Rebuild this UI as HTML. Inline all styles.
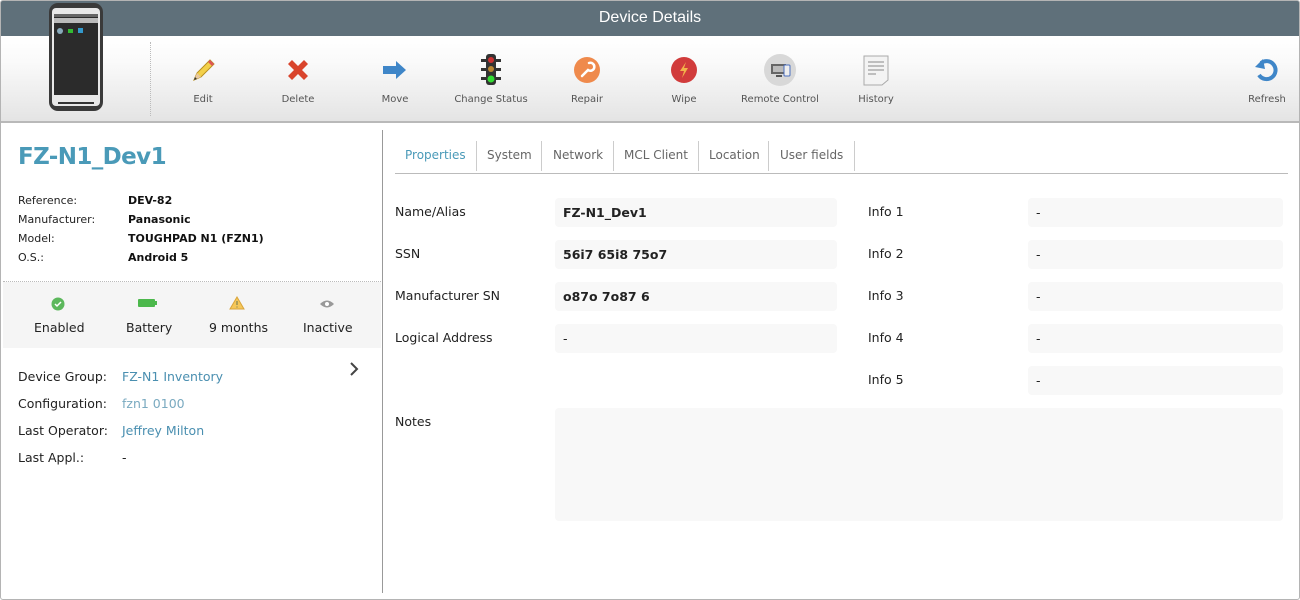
<!DOCTYPE html>
<html><head><meta charset="utf-8">
<style>
*{margin:0;padding:0;box-sizing:border-box}
body{width:1300px;height:600px;background:#fff;font-family:"DejaVu Sans",Verdana,sans-serif;position:relative;overflow:hidden;color:#222}
.abs{position:absolute}
#frame{left:0;top:0;width:1300px;height:600px;border:1px solid #b4b4b4;border-radius:3px}
#hdr{left:1px;top:1px;width:1298px;height:35px;background:#5f707a;color:#fff;font-family:"Liberation Sans",sans-serif;font-size:16px;text-align:center;line-height:34px}
#tb{left:1px;top:36px;width:1298px;height:87px;background:linear-gradient(#fff,#fafafa 30%,#e4e4e4);border-bottom:2px solid #b9b9b9}
.tl{position:absolute;top:94px;font-size:10px;color:#555;transform:translateX(-50%);white-space:nowrap}
.ic{position:absolute;top:56px;transform:translateX(-50%)}
.lbl{position:absolute;font-size:11px;color:#222}
.val{position:absolute;font-size:11px;font-weight:bold;color:#111}
.l2{position:absolute;font-size:12.5px;color:#222}
.lnk{position:absolute;font-size:12.5px;color:#4a8fb0}
.tab{position:absolute;top:148px;font-size:12px;color:#666}
.sep{position:absolute;top:141px;width:1px;height:30px;background:#ccc}
.fl{position:absolute;font-size:12.5px;color:#222}
.box{position:absolute;background:#f8f8f8;border-radius:4px;height:29px;font-size:12.5px;padding:7px 8px;color:#222}
.box b{font-weight:bold}
</style></head><body>
<div id="hdr" class="abs">Device Details</div>
<div id="tb" class="abs"></div>
<svg class="abs" style="left:48px;top:2px" width="56" height="110" viewBox="0 0 56 110">
<rect x="1" y="1" width="54" height="108" rx="9" fill="#3a3a3a"/>
<rect x="4" y="6" width="48" height="98" rx="4" fill="#e8e8e8"/>
<rect x="6" y="12" width="44" height="81" fill="#2b2b2b"/>
<rect x="6" y="12" width="44" height="3" fill="#666"/>
<rect x="6" y="16" width="44" height="5" fill="#bbb"/>
<circle cx="12" cy="29" r="3" fill="#8ab"/><rect x="20" y="27" width="5" height="4" fill="#3b3"/><rect x="30" y="26" width="5" height="5" fill="#39c"/>
<rect x="10" y="100" width="36" height="2" fill="#333"/>
</svg>
<div class="abs" style="left:150px;top:42px;height:74px;border-left:1px dotted #bbb"></div>
<svg class="ic" style="left:203px" width="28" height="28" viewBox="0 0 28 28"><path d="M5 24 L8 17 L21 4 L25 8 L12 21 Z" fill="#f3d04a" stroke="#b89020" stroke-width="1"/><path d="M21 4 L25 8 L23 10 L19 6Z" fill="#d55"/><path d="M5 24 L8 17 L12 21Z" fill="#e9c9a0"/><path d="M5 24 L6 21 L8 23Z" fill="#333"/></svg>
<svg class="ic" style="left:298px" width="28" height="28" viewBox="0 0 28 28"><path d="M4 8 L8 4 L14 10 L20 4 L24 8 L18 14 L24 20 L20 24 L14 18 L8 24 L4 20 L10 14 Z" fill="#d9442c"/></svg>
<svg class="ic" style="left:395px" width="28" height="28" viewBox="0 0 28 28"><path d="M2 10 H15 V5 L25 14 L15 23 V18 H2 Z" fill="#3f86c8"/></svg>
<svg class="ic" style="left:491px;top:53px" width="24" height="34" viewBox="0 0 24 34"><rect x="7" y="1" width="10" height="31" rx="3" fill="#333"/><path d="M2 6h5v3H2zM17 6h5v3h-5zM2 15h5v3H2zM17 15h5v3h-5zM2 24h5v3H2zM17 24h5v3h-5z" fill="#333"/><circle cx="12" cy="7" r="3" fill="#c33"/><circle cx="12" cy="16" r="3" fill="#b83"/><circle cx="12" cy="26" r="3.5" fill="#3d3"/></svg>
<svg class="ic" style="left:587px" width="28" height="28" viewBox="0 0 28 28"><circle cx="14" cy="14" r="13" fill="#ef8a4c"/><path d="M9 20 L15 14 M15 14 a4 4 0 1 0 1 -7" stroke="#fff" stroke-width="2.5" fill="none" stroke-linecap="round"/></svg>
<svg class="ic" style="left:684px" width="28" height="28" viewBox="0 0 28 28"><circle cx="14" cy="14" r="13" fill="#d13b3b"/><path d="M16 6 L10 15 H14 L12 22 L18 12 H14 Z" fill="#f2b34a"/></svg>
<svg class="ic" style="left:780px;top:54px" width="32" height="32" viewBox="0 0 32 32"><circle cx="16" cy="16" r="16" fill="#d8d8d8"/><rect x="7" y="10" width="15" height="10" fill="#666"/><rect x="9" y="12" width="11" height="6" fill="#bbb"/><rect x="20" y="11" width="6" height="11" rx="1" fill="#eee" stroke="#4a6fbf"/><rect x="12" y="21" width="6" height="2" fill="#555"/></svg>
<svg class="ic" style="left:876px;top:54px" width="28" height="32" viewBox="0 0 28 32"><path d="M2 2 H26 V26 L20 31 H2 Z" fill="#f3f3f3" stroke="#aaa"/><path d="M6 8h16M6 12h16M6 16h16M6 20h8" stroke="#888"/></svg>
<svg class="ic" style="left:1267px" width="28" height="28" viewBox="0 0 28 28"><path d="M8 7 A9 9 0 1 1 6 19" stroke="#3f86c8" stroke-width="4" fill="none"/><path d="M2 11 L10 3 L12 13Z" fill="#3f86c8"/></svg>
<div class="tl" style="left:203px">Edit</div>
<div class="tl" style="left:298px">Delete</div>
<div class="tl" style="left:395px">Move</div>
<div class="tl" style="left:491px">Change Status</div>
<div class="tl" style="left:587px">Repair</div>
<div class="tl" style="left:684px">Wipe</div>
<div class="tl" style="left:780px">Remote Control</div>
<div class="tl" style="left:876px">History</div>
<div class="tl" style="left:1267px">Refresh</div>
<div class="abs" style="left:18px;top:144px;font-size:23px;font-weight:bold;color:#4a9ab8;font-family:'DejaVu Sans',sans-serif;letter-spacing:-0.6px">FZ-N1_Dev1</div>
<div class="lbl" style="left:18px;top:194px">Reference:</div><div class="val" style="left:128px;top:194px">DEV-82</div>
<div class="lbl" style="left:18px;top:213px">Manufacturer:</div><div class="val" style="left:128px;top:213px">Panasonic</div>
<div class="lbl" style="left:18px;top:232px">Model:</div><div class="val" style="left:128px;top:232px">TOUGHPAD N1 (FZN1)</div>
<div class="lbl" style="left:18px;top:251px">O.S.:</div><div class="val" style="left:128px;top:251px">Android 5</div>
<div class="abs" style="left:3px;top:281px;width:378px;border-top:1px dotted #bbb"></div>
<div class="abs" style="left:3px;top:282px;width:378px;height:66px;background:#f5f5f5"></div>
<svg class="abs" style="left:51px;top:297px" width="14" height="14"><circle cx="7" cy="7" r="6.5" fill="#5cb85c"/><path d="M4 7 L6 9 L10 5" stroke="#fff" stroke-width="1.5" fill="none"/></svg>
<svg class="abs" style="left:138px;top:298px" width="20" height="10"><rect x="0" y="1" width="17" height="8" rx="1" fill="#4cb84c"/><rect x="17" y="3" width="2" height="4" fill="#4cb84c"/></svg>
<svg class="abs" style="left:229px;top:296px" width="16" height="14"><path d="M8 1 L15 13 H1 Z" fill="#f5c75a" stroke="#d9a43a"/><path d="M8 5v4M8 10.5v1" stroke="#885" stroke-width="1.3"/></svg>
<svg class="abs" style="left:319px;top:299px" width="16" height="10"><path d="M1 5 Q8 -2 15 5 Q8 12 1 5Z" fill="#999"/><circle cx="8" cy="5" r="2" fill="#fff"/></svg>
<div class="l2" style="left:34px;top:320px">Enabled</div>
<div class="l2" style="left:126px;top:320px">Battery</div>
<div class="l2" style="left:209px;top:320px">9 months</div>
<div class="l2" style="left:303px;top:320px">Inactive</div>
<div class="l2" style="left:18px;top:369px">Device Group:</div><div class="lnk" style="left:122px;top:369px">FZ-N1 Inventory</div>
<div class="l2" style="left:18px;top:396px">Configuration:</div><div class="lnk" style="left:122px;top:396px;color:#7aaac0">fzn1 0100</div>
<div class="l2" style="left:18px;top:423px">Last Operator:</div><div class="lnk" style="left:122px;top:423px">Jeffrey Milton</div>
<div class="l2" style="left:18px;top:450px">Last Appl.:</div><div class="l2" style="left:122px;top:450px">-</div>
<svg class="abs" style="left:348px;top:361px" width="12" height="16"><path d="M3 2 L9 8 L3 14" stroke="#444" stroke-width="2" fill="none"/></svg>
<div class="abs" style="left:382px;top:130px;width:1px;height:463px;background:#999"></div>
<div class="tab" style="left:405px;color:#4a9ab8">Properties</div>
<div class="sep" style="left:476px"></div>
<div class="tab" style="left:487px">System</div>
<div class="sep" style="left:541px"></div>
<div class="tab" style="left:553px">Network</div>
<div class="sep" style="left:613px"></div>
<div class="tab" style="left:624px">MCL Client</div>
<div class="sep" style="left:698px"></div>
<div class="tab" style="left:709px">Location</div>
<div class="sep" style="left:768px"></div>
<div class="tab" style="left:780px">User fields</div>
<div class="sep" style="left:854px"></div>
<div class="abs" style="left:395px;top:173px;width:893px;height:1px;background:#bbb"></div>
<div class="fl" style="left:395px;top:204px">Name/Alias</div><div class="box" style="left:555px;top:198px;width:282px"><b>FZ-N1_Dev1</b></div>
<div class="fl" style="left:395px;top:246px">SSN</div><div class="box" style="left:555px;top:240px;width:282px"><b>56i7 65i8 75o7</b></div>
<div class="fl" style="left:395px;top:288px">Manufacturer SN</div><div class="box" style="left:555px;top:282px;width:282px"><b>o87o 7o87 6</b></div>
<div class="fl" style="left:395px;top:330px">Logical Address</div><div class="box" style="left:555px;top:324px;width:282px">-</div>
<div class="fl" style="left:868px;top:204px">Info 1</div><div class="box" style="left:1028px;top:198px;width:255px">-</div>
<div class="fl" style="left:868px;top:246px">Info 2</div><div class="box" style="left:1028px;top:240px;width:255px">-</div>
<div class="fl" style="left:868px;top:288px">Info 3</div><div class="box" style="left:1028px;top:282px;width:255px">-</div>
<div class="fl" style="left:868px;top:330px">Info 4</div><div class="box" style="left:1028px;top:324px;width:255px">-</div>
<div class="fl" style="left:868px;top:372px">Info 5</div><div class="box" style="left:1028px;top:366px;width:255px">-</div>
<div class="fl" style="left:395px;top:414px">Notes</div><div class="box" style="left:555px;top:408px;width:728px;height:113px"></div>
<div id="frame" class="abs"></div>
</body></html>
